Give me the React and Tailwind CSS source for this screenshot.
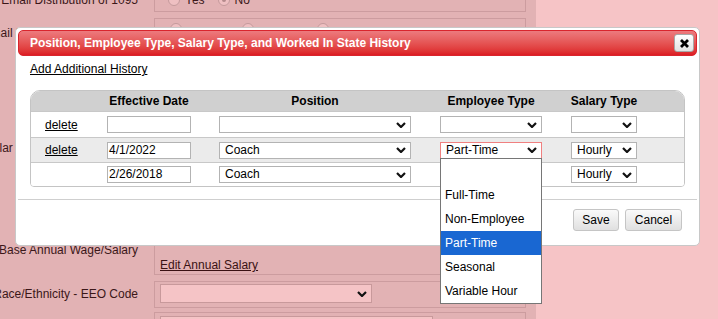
import React from "react";

const Chevron = () => (
  <svg width="10" height="6" viewBox="0 0 10 6" className="shrink-0">
    <path d="M1 1 L5 5 L9 1" fill="none" stroke="#111" strokeWidth="2.2" />
  </svg>
);

const Radio = ({ checked }) => (
  <span className="inline-flex items-center justify-center w-[12px] h-[12px] rounded-full border border-[#c49a9c] bg-[#efc0c2]">
    {checked && <span className="w-[4px] h-[4px] rounded-full bg-[#b48a8c]" />}
  </span>
);

const FormRow = ({ label, className, labelPad, cellClass, children }) => (
  <div className={`flex shrink-0 ${className}`}>
    <div className={`flex justify-end w-[154px] shrink-0 pr-[16px] ${labelPad}`}>
      <span className="whitespace-nowrap leading-[14px]">{label}</span>
    </div>
    <div className={`flex-1 border border-[#cc9c9f] ${cellClass}`}>{children}</div>
  </div>
);

const BackgroundForm = () => (
  <div className="flex flex-col w-[536px] h-full bg-[#e2b2b4] pr-[10px] text-[#3b1719]">
    <FormRow
      label="Email Distribution of 1095"
      className="-mt-[14px] h-[26px]"
      labelPad="pt-[7px]"
      cellClass="flex items-center gap-[5px] pl-[13px] pt-[1px]"
    >
      <Radio />
      <span className="mr-[8px]">Yes</span>
      <Radio checked />
      <span>No</span>
    </FormRow>
    <FormRow
      label="Email Distribution Preference"
      className="mt-[6px] h-[109px]"
      labelPad="pt-[8px]"
      cellClass="flex items-start gap-[5px] pl-[15px] pt-[4px]"
    >
      <Radio />
      <span className="w-[50px]">Paper</span>
      <Radio />
      <span className="w-[53px]">Email</span>
      <Radio />
      <span>Both</span>
    </FormRow>
    <FormRow
      label="Regular Work Hours Per Month"
      className="mt-[6px] h-[97px]"
      labelPad="pt-[8px]"
      cellClass=""
    />
    <FormRow
      label="Base Annual Wage/Salary"
      className="mt-[6px] h-[39px]"
      labelPad="pt-[7px]"
      cellClass="pl-[5px] pt-[21px] leading-[14px]"
    >
      <a className="underline text-[#3a1113]">Edit Annual Salary</a>
    </FormRow>
    <FormRow
      label="Race/Ethnicity - EEO Code"
      className="mt-[6px] h-[27px]"
      labelPad="pt-[6px]"
      cellClass="pl-[5px] pt-[2px]"
    >
      <div className="flex items-center justify-end w-[212px] h-[19px] border border-[#c8999b] bg-[#f5c4c6] pr-[4px]">
        <Chevron />
      </div>
    </FormRow>
    <FormRow
      label="Ethnicity"
      className="mt-[4px] h-[30px]"
      labelPad="pt-[6px]"
      cellClass="pl-[5px] pt-[3px]"
    >
      <div className="w-[273px] h-[19px] border border-[#c8999b] bg-[#f5c4c6]" />
    </FormRow>
  </div>
);

const FakeSelect = ({ width, value, focused }) => (
  <div
    className={`flex items-center justify-between h-[17px] bg-white border pl-[5px] pr-[4px] ${width} ${
      focused ? "border-[#f08080]" : "border-[#b3b3b3]"
    }`}
  >
    <span className="leading-[15px]">{value}</span>
    <Chevron />
  </div>
);

const rows = [
  { del: true, date: "", pos: "", emp: "", sal: "", bg: "bg-white", h: "h-[26px]" },
  { del: true, date: "4/1/2022", pos: "Coach", emp: "Part-Time", sal: "Hourly", bg: "bg-[#ebebeb]", h: "h-[25px]", focus: true },
  { del: false, date: "2/26/2018", pos: "Coach", emp: "", sal: "Hourly", bg: "bg-white", h: "h-[24px]" },
];

const HeadCell = ({ className, children }) => (
  <span className={`flex justify-center whitespace-nowrap ${className}`}>{children}</span>
);

const HistoryDialog = () => (
  <div className="absolute left-[15px] top-[27px] w-[685px] h-[219px] flex flex-col bg-white border border-[#c8c8c8] rounded-[5px] p-[2px] text-black">
    <div className="flex items-center justify-between h-[26px] shrink-0 rounded-[5px] border border-[#d9252d] bg-gradient-to-b from-[#ec7a7e] to-[#dc1b23] pl-[11px] pr-[2px]">
      <span className="font-bold text-white text-[12px]">
        Position, Employee Type, Salary Type, and Worked In State History
      </span>
      <button className="flex items-center justify-center w-[20px] h-[18px] rounded-[3px] border border-[#a8a8a8] bg-gradient-to-b from-[#ffffff] to-[#e3e3e3]">
        <svg width="11" height="11" viewBox="0 0 11 11">
          <path d="M2 2L9 9M9 2L2 9" stroke="#000" strokeWidth="2.8" />
        </svg>
      </button>
    </div>

    <div className="pl-[12px] mt-[6px] leading-[14px]">
      <a className="underline">Add Additional History</a>
    </div>

    <div className="ml-[12px] mt-[14px] w-[655px] border border-[#c4c4c4] rounded-t-[10px] rounded-b-[4px] overflow-hidden">
      <div className="flex items-center h-[20px] bg-[#d0d0d0] pl-[14px] font-bold">
        <span className="w-[62px]" />
        <HeadCell className="w-[84px]">Effective Date</HeadCell>
        <HeadCell className="w-[192px] ml-[28px]">Position</HeadCell>
        <HeadCell className="w-[102px] ml-[29px]">Employee Type</HeadCell>
        <HeadCell className="w-[66px] ml-[29px]">Salary Type</HeadCell>
      </div>
      {rows.map((r, i) => (
        <div key={i} className={`flex items-center border-t border-[#c8c8c8] pl-[14px] ${r.bg} ${r.h}`}>
          <span className="w-[62px]">{r.del && <a className="underline">delete</a>}</span>
          <div className="w-[84px] h-[17px] border border-[#b3b3b3] bg-white pl-[1px] leading-[15px]">
            {r.date}
          </div>
          <div className="ml-[28px]">
            <FakeSelect width="w-[192px]" value={r.pos} />
          </div>
          <div className="ml-[29px]">
            <FakeSelect width="w-[102px]" value={r.emp} focused={r.focus} />
          </div>
          <div className="ml-[29px]">
            <FakeSelect width="w-[66px]" value={r.sal} />
          </div>
        </div>
      ))}
    </div>

    <div className="mt-[12px] border-t border-[#cfcfcf] flex justify-end gap-[6px] pt-[9px] pr-[15px]">
      <button className="w-[46px] h-[22px] rounded-[3px] border border-[#c5c5c5] bg-gradient-to-b from-[#fafafa] to-[#e0e0e0] text-[12px]">
        Save
      </button>
      <button className="w-[57px] h-[22px] rounded-[3px] border border-[#c5c5c5] bg-gradient-to-b from-[#fafafa] to-[#e0e0e0] text-[12px]">
        Cancel
      </button>
    </div>
  </div>
);

const options = ["", "Full-Time", "Non-Employee", "Part-Time", "Seasonal", "Variable Hour"];

const OptionList = () => (
  <div className="absolute left-[440px] top-[158px] w-[102px] border border-[#767676] bg-white text-black">
    {options.map((o, i) => (
      <div
        key={i}
        className={`h-[24px] leading-[24px] pl-[4px] ${
          o === "Part-Time" ? "bg-[#1967d2] text-white" : ""
        }`}
      >
        {o}
      </div>
    ))}
  </div>
);

export default function App() {
  return (
    <div className="relative w-[718px] h-[319px] overflow-hidden bg-[#f6c4c6] font-['Liberation_Sans',Arial,sans-serif] text-[12px]">
      <BackgroundForm />
      <HistoryDialog />
      <OptionList />
    </div>
  );
}
